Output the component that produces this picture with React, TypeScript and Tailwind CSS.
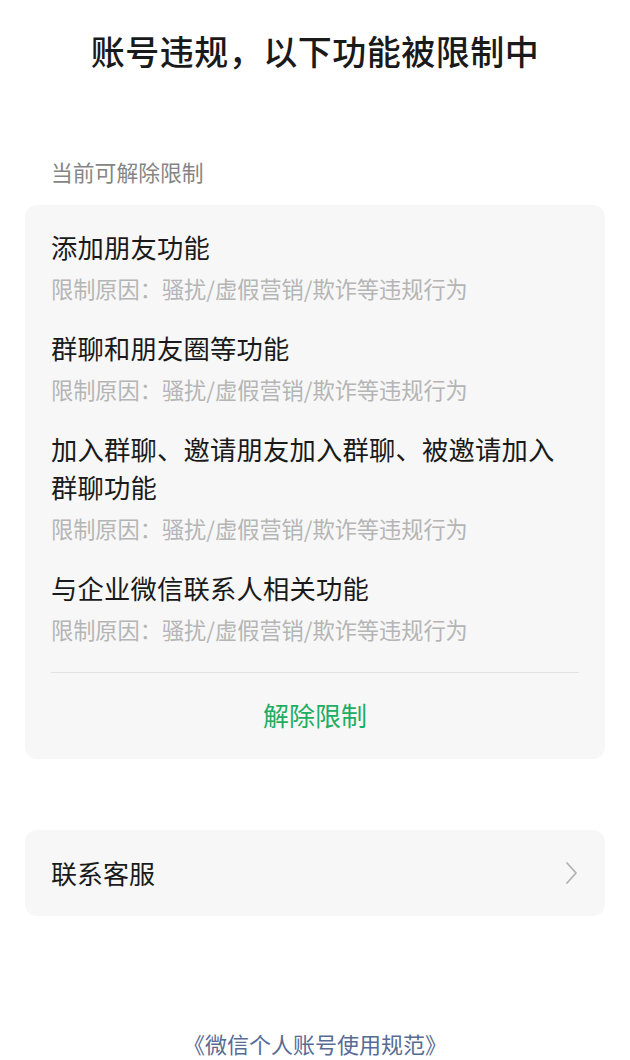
import React from "react";

const items = [
  { title: ["添加朋友功能"] },
  { title: ["群聊和朋友圈等功能"] },
  { title: ["加入群聊、邀请朋友加入群聊、被邀请加入", "群聊功能"] },
  { title: ["与企业微信联系人相关功能"] },
];

const reason = "限制原因：骚扰/虚假营销/欺诈等违规行为";

export default function App() {
  return (
    <div
      className="w-[630px] h-[1060px] bg-white flex flex-col overflow-hidden"
      style={{ fontFamily: '"Noto Sans CJK SC", "Noto Sans", sans-serif' }}
    >
      {/* Title */}
      <h1 className="mt-[30px] text-center text-[34px] leading-[42px] font-medium text-[#1a1a1a] tracking-[0.5px]">
        账号违规，以下功能被限制中
      </h1>

      <div className="mt-[85px] px-[51px] text-[21.8px] leading-[30px] text-[#858585]">
        当前可解除限制
      </div>

      {/* Restrictions card */}
      <div className="mx-[25px] mt-[18px] rounded-[12px] bg-[#f7f7f7] px-[26px] pt-[23px] pb-[25px]">
        <div className="flex flex-col gap-[26px]">
          {items.map((item, i) => (
            <div key={i}>
              {item.title.map((line, j) => (
                <div
                  key={j}
                  className="text-[26.3px] leading-[38px] text-[#1a1a1a] tracking-[0.2px]"
                >
                  {line}
                </div>
              ))}
              <div className="mt-[7px] text-[22.2px] leading-[30px] text-[#b5b5b5]">
                {reason}
              </div>
            </div>
          ))}
        </div>
        <div className="mt-[28px] h-px bg-[#e2e2e2]" />
        <div className="mt-[23px] text-center text-[26px] leading-[38px] text-[#20ae62]">
          解除限制
        </div>
      </div>

      {/* Contact card */}
      <div className="mx-[25px] mt-[71px] h-[86px] rounded-[12px] bg-[#f7f7f7] pl-[26px] pr-[26px] flex items-center justify-between">
        <span className="text-[26px] leading-[38px] text-[#1a1a1a]">联系客服</span>
        <svg width="16" height="24" viewBox="0 0 16 24" fill="none">
          <path
            d="M4 2 L13 12 L4 22"
            stroke="#b2b2b2"
            strokeWidth="1.8"
            strokeLinecap="round"
            strokeLinejoin="round"
          />
        </svg>
      </div>

      {/* Footer link */}
      <div className="mt-auto mb-[2px] text-center text-[22px] leading-[30px] text-[#576b95]">
        《微信个人账号使用规范》
      </div>
    </div>
  );
}
